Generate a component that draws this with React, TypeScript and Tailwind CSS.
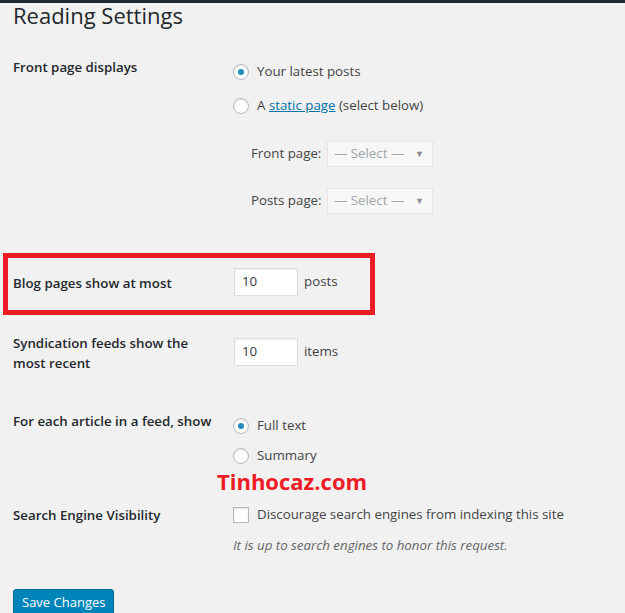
import React from "react";

function Radio({ checked = false }: { checked?: boolean }) {
  return (
    <span className="relative inline-flex h-4 w-4 shrink-0 items-center justify-center rounded-full border border-[#b4b9be] bg-white shadow-[inset_0_1px_2px_rgba(0,0,0,0.1)]">
      {checked && <span className="h-[6px] w-[6px] rounded-full bg-[#1e8cbe]" />}
    </span>
  );
}

function SelectBox() {
  return (
    <div className="flex h-[26px] w-[106px] items-center justify-between border border-[#e5e5e5] bg-[#f7f7f7] pl-[6px] pr-[8px] text-[13.3px] text-[#a0a5aa]">
      <span>— Select —</span>
      <span className="text-[9px] text-[#8a8f94]">▼</span>
    </div>
  );
}

function NumberInput({ value }: { value: string }) {
  return (
    <div className="flex h-[28px] w-[64px] items-center border border-[#ddd] bg-white pl-[7px] text-[13.3px] text-[#32373c] shadow-[inset_0_1px_2px_rgba(0,0,0,0.07)]">
      {value}
    </div>
  );
}

export default function App() {
  return (
    <div className="relative min-h-screen bg-[#f1f1f1] font-['Open_Sans','Noto_Sans',sans-serif] text-[13.3px] text-[#444]">
      <div className="h-[3px] bg-[#23282d]" />
      <div className="pl-[13px]">
        <h1 className="text-[22px] font-normal leading-[24px] text-[#23282d]">Reading Settings</h1>

        {/* Front page displays */}
        <div className="mt-[30px] flex items-start">
          <div className="w-[220px] shrink-0 font-semibold leading-5 text-[#23282d]">Front page displays</div>
          <div className="pt-[5px]">
            <div className="flex h-5 items-center gap-2">
              <Radio checked />
              <span>Your latest posts</span>
            </div>
            <div className="mt-[14px] flex h-5 items-center gap-2">
              <Radio />
              <span>
                A <a className="text-[#0073aa] underline">static page</a> (select below)
              </span>
            </div>
            <div className="ml-[18px] mt-[25px] flex items-center">
              <span className="w-[76px] whitespace-nowrap">Front page:</span>
              <SelectBox />
            </div>
            <div className="ml-[18px] mt-[21px] flex items-center">
              <span className="w-[76px] whitespace-nowrap">Posts page:</span>
              <SelectBox />
            </div>
          </div>
        </div>

        {/* Blog pages */}
        <div className="mt-[54px] flex items-start">
          <div className="w-[220px] shrink-0 pt-[5px] font-semibold leading-5 text-[#23282d]">Blog pages show at most</div>
          <div className="ml-px flex items-center gap-[6px]">
            <NumberInput value="10" />
            <span>posts</span>
          </div>
        </div>

        {/* Syndication */}
        <div className="mt-[37px] flex items-start">
          <div className="w-[220px] shrink-0 pr-[30px] font-semibold leading-5 text-[#23282d]">
            Syndication feeds show the most recent
          </div>
          <div className="ml-px flex items-center gap-[6px] pt-[5px]">
            <NumberInput value="10" />
            <span>items</span>
          </div>
        </div>

        {/* Feed article */}
        <div className="mt-[38px] flex items-start">
          <div className="w-[220px] shrink-0 font-semibold leading-5 text-[#23282d]">For each article in a feed, show</div>
          <div className="pt-[5px]">
            <div className="flex h-5 items-center gap-2">
              <Radio checked />
              <span>Full text</span>
            </div>
            <div className="mt-[10px] flex h-5 items-center gap-2">
              <Radio />
              <span>Summary</span>
            </div>
          </div>
        </div>

        {/* Search engine visibility */}
        <div className="mt-[39px] flex items-start">
          <div className="w-[220px] shrink-0 font-semibold leading-5 text-[#23282d]">Search Engine Visibility</div>
          <div>
            <div className="flex h-5 items-center gap-2">
              <span className="h-4 w-4 shrink-0 border border-[#b4b9be] bg-white shadow-[inset_0_1px_2px_rgba(0,0,0,0.1)]" />
              <span>Discourage search engines from indexing this site</span>
            </div>
            <div className="mt-[10px] leading-5 italic text-[#666]">It is up to search engines to honor this request.</div>
          </div>
        </div>

        <button className="mt-[34px] h-[28px] rounded-[3px] border border-[#006799] bg-[#0085ba] px-[8px] text-[13px] text-white shadow-[0_1px_0_#006799]">
          Save Changes
        </button>
      </div>

      {/* annotations */}
      <div className="absolute left-[3px] top-[253px] h-[62px] w-[372px] border-[5px] border-[#ed1c24]" />
      <div className="absolute left-[217px] top-[467px] text-[22px] font-bold leading-[28px] text-[#ed1c24]">Tinhocaz.com</div>
    </div>
  );
}
